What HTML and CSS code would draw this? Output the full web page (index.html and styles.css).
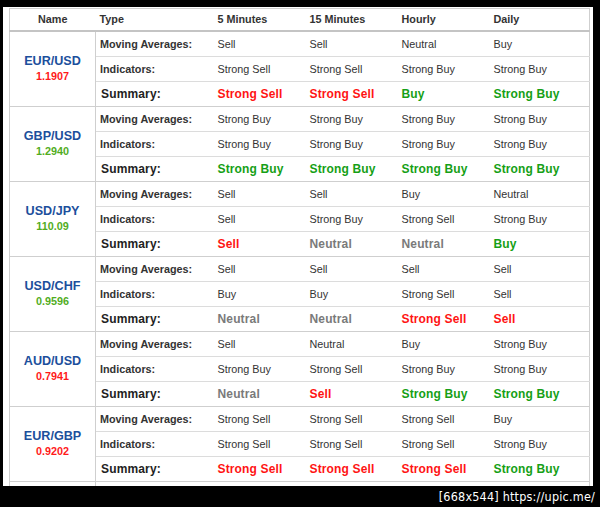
FILE: index.html
```html
<!DOCTYPE html>
<html>
<head>
<meta charset="utf-8">
<link rel="stylesheet" href="styles.css">
</head>
<body>
<div class="shot">
  <div class="frame">
    <table class="tech">
      <colgroup>
        <col class="c-name"><col class="c-type"><col class="c-val"><col class="c-val"><col class="c-val"><col class="c-daily">
      </colgroup>
      <thead>
        <tr><th class="th-name">Name</th><th>Type</th><th>5 Minutes</th><th>15 Minutes</th><th>Hourly</th><th>Daily</th></tr>
      </thead>
      <tbody>
        <tr><td class="pair" rowspan="3"><div class="sym">EUR/USD</div><div class="px dn">1.1907</div></td><td class="type">Moving Averages:</td><td>Sell</td><td>Sell</td><td>Neutral</td><td>Buy</td></tr>
        <tr><td class="type">Indicators:</td><td>Strong Sell</td><td>Strong Sell</td><td>Strong Buy</td><td>Strong Buy</td></tr>
        <tr class="sum"><td class="type">Summary:</td><td class="sell">Strong Sell</td><td class="sell">Strong Sell</td><td class="buy">Buy</td><td class="buy">Strong Buy</td></tr>

        <tr><td class="pair" rowspan="3"><div class="sym">GBP/USD</div><div class="px up">1.2940</div></td><td class="type">Moving Averages:</td><td>Strong Buy</td><td>Strong Buy</td><td>Strong Buy</td><td>Strong Buy</td></tr>
        <tr><td class="type">Indicators:</td><td>Strong Buy</td><td>Strong Buy</td><td>Strong Buy</td><td>Strong Buy</td></tr>
        <tr class="sum"><td class="type">Summary:</td><td class="buy">Strong Buy</td><td class="buy">Strong Buy</td><td class="buy">Strong Buy</td><td class="buy">Strong Buy</td></tr>

        <tr><td class="pair" rowspan="3"><div class="sym">USD/JPY</div><div class="px up">110.09</div></td><td class="type">Moving Averages:</td><td>Sell</td><td>Sell</td><td>Buy</td><td>Neutral</td></tr>
        <tr><td class="type">Indicators:</td><td>Sell</td><td>Strong Buy</td><td>Strong Sell</td><td>Strong Buy</td></tr>
        <tr class="sum"><td class="type">Summary:</td><td class="sell">Sell</td><td class="neu">Neutral</td><td class="neu">Neutral</td><td class="buy">Buy</td></tr>

        <tr><td class="pair" rowspan="3"><div class="sym">USD/CHF</div><div class="px up">0.9596</div></td><td class="type">Moving Averages:</td><td>Sell</td><td>Sell</td><td>Sell</td><td>Sell</td></tr>
        <tr><td class="type">Indicators:</td><td>Buy</td><td>Buy</td><td>Strong Sell</td><td>Sell</td></tr>
        <tr class="sum"><td class="type">Summary:</td><td class="neu">Neutral</td><td class="neu">Neutral</td><td class="sell">Strong Sell</td><td class="sell">Sell</td></tr>

        <tr><td class="pair" rowspan="3"><div class="sym">AUD/USD</div><div class="px dn">0.7941</div></td><td class="type">Moving Averages:</td><td>Sell</td><td>Neutral</td><td>Buy</td><td>Strong Buy</td></tr>
        <tr><td class="type">Indicators:</td><td>Strong Buy</td><td>Strong Sell</td><td>Strong Buy</td><td>Strong Buy</td></tr>
        <tr class="sum"><td class="type">Summary:</td><td class="neu">Neutral</td><td class="sell">Sell</td><td class="buy">Strong Buy</td><td class="buy">Strong Buy</td></tr>

        <tr><td class="pair" rowspan="3"><div class="sym">EUR/GBP</div><div class="px dn">0.9202</div></td><td class="type">Moving Averages:</td><td>Strong Sell</td><td>Strong Sell</td><td>Strong Sell</td><td>Buy</td></tr>
        <tr><td class="type">Indicators:</td><td>Strong Sell</td><td>Strong Sell</td><td>Strong Sell</td><td>Strong Buy</td></tr>
        <tr class="sum"><td class="type">Summary:</td><td class="sell">Strong Sell</td><td class="sell">Strong Sell</td><td class="sell">Strong Sell</td><td class="buy">Strong Buy</td></tr>

        <tr class="stub"><td class="pair"></td><td></td><td></td><td></td><td></td><td></td></tr>
      </tbody>
    </table>
  </div>
  <div class="caption">[668x544] https://upic.me/</div>
</div>
</body>
</html>
```
FILE: styles.css
```css
html, body {
  margin: 0;
  padding: 0;
  background: #000;
}
.shot {
  width: 600px;
  height: 507px;
  overflow: hidden;
  background: #000;
  position: relative;
}
.frame {
  margin: 7px 7px 0 3px;
  height: 479px;
  background: #fff;
  padding: 1px 0 0 6px;
  box-sizing: border-box;
  overflow: hidden;
}
.tech {
  border-collapse: collapse;
  table-layout: fixed;
  width: 580px;
  font-family: "Liberation Sans", Arial, sans-serif;
  font-size: 10.8px;
  color: #333;
  border: 1px solid #cfcfcf;
}
.c-name { width: 86px; }
.c-type { width: 118px; }
.c-val { width: 92px; }
.c-daily { width: 100px; }
.tech th {
  text-align: left;
  font-weight: bold;
  color: #333;
  height: 21px;
  padding: 0 4px;
  line-height: 21px;
  border-bottom: 2px solid #c4c4c4;
}
.tech th.th-name { text-align: center; }
.tech td {
  height: 24px;
  line-height: 24px;
  padding: 0 4px;
  border-bottom: 1px solid #dcdcdc;
  white-space: nowrap;
}
.tech td.pair {
  text-align: center;
  vertical-align: middle;
  border-right: 1px solid #cfcfcf;
  border-bottom: 1px solid #cfcfcf;
  padding: 0;
}
.tech tr.sum td { border-bottom-color: #cfcfcf; }
.sym {
  font-size: 12.6px;
  font-weight: bold;
  color: #1c4f9c;
  line-height: 15px;
}
.px {
  font-size: 10.8px;
  font-weight: bold;
  line-height: 15px;
}
.px.dn { color: #ff1a1a; }
.px.up { color: #52ad1e; }
.type { font-weight: bold; color: #333; }
.sum td {
  font-size: 12px;
  font-weight: bold;
  letter-spacing: 0.15px;
}
.sum td.type { color: #222; padding-left: 5px; }
.sell { color: #ff1414; }
.buy { color: #16a016; }
.neu { color: #7a7a7a; }
.caption {
  position: absolute;
  right: 5px;
  bottom: 3px;
  color: #fff;
  font-family: "DejaVu Sans Condensed", "DejaVu Sans", sans-serif;
  font-size: 12.5px;
  letter-spacing: 0.2px;
}
```
